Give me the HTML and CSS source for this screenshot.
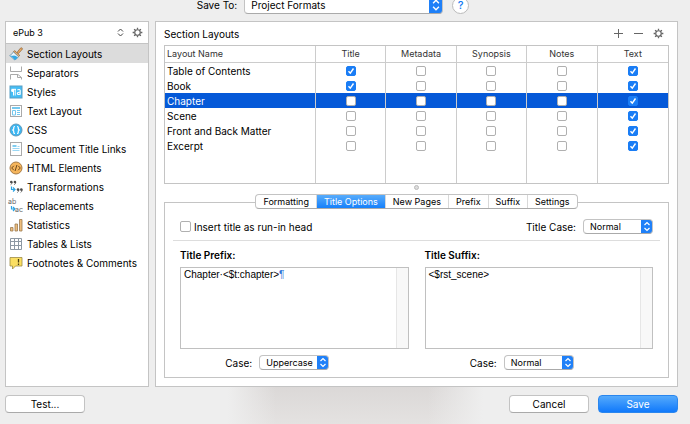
FILE: index.html
```html
<!DOCTYPE html>
<html lang="en">
<head>
    <meta charset="UTF-8">
    <meta name="viewport" content="width=device-width, initial-scale=1.0">
    <title>Compile</title>
    <link rel="stylesheet" href="styles.css">
</head>
<body>

<svg class="defs" width="0" height="0" aria-hidden="true">
    <symbol id="gear" viewBox="0 0 12 12">
        <circle cx="6" cy="6" r="3" fill="none" stroke="currentColor" stroke-width="1.3"/>
        <path d="M6 .7V2.8M6 9.2V11.3M.7 6H2.8M9.2 6H11.3M2.3 2.3L3.8 3.8M8.2 8.2L9.7 9.7M9.7 2.3L8.2 3.8M3.8 8.2L2.3 9.7" stroke="currentColor" stroke-width="1.4"/>
    </symbol>
</svg>

<div class="top-bar">
    <label for="saveTo">Save To:</label>
    <select id="saveTo" class="popup popup-large">
        <option>Project Formats</option>
    </select>
    <button type="button" class="help" aria-label="Help">?</button>
</div>

<div class="panels">
    <!-- Sidebar -->
    <nav class="sidebar">
        <div class="sidebar-header">
            <select class="format" aria-label="Format">
                <option>ePub 3</option>
            </select>
            <button type="button" class="icon-button" aria-label="Format options"><svg width="11" height="11"><use href="#gear"/></svg></button>
        </div>
        <ul class="sections">
            <li><a href="#" class="active">
                <svg viewBox="0 0 14 14"><path d="M8.2 5.2L11.4 1.2Q12.4 .3 13.2 1.2 13.8 2 12.8 3L9.4 6.4z" fill="#e9a860" stroke="#8a6238" stroke-width=".7"/><path d="M5.6 3.6L10.8 8.4 9.4 9.6 4.4 4.9z" fill="#e9b070" stroke="#8a6238" stroke-width=".7"/><path d="M4.4 4.9L9.4 9.6Q7.5 12.5 5.6 13 4.5 11.5 3.2 10.8 1.8 9.6 .6 8.6 3.2 7.4 4.4 4.9z" fill="#f2f7fa" stroke="#5d8ba6" stroke-width=".7"/><path d="M1 8.6Q3.2 9.2 5 8.4 7 8.6 8.8 10.4 7.2 12.4 5.6 13 3.6 10.6 1 8.6z" fill="#35a9e6"/></svg>
                Section Layouts</a></li>
            <li><a href="#">
                <svg viewBox="0 0 14 14" fill="none" stroke="#a9a9a9"><path d="M1.5 .5V5.500H12.500V.5M1.500 13.500V8.500H9L12.500 11.500V13.500M8.500 8.500V11.500H12.500"/></svg>
                Separators</a></li>
            <li><a href="#">
                <svg viewBox="0 0 14 14"><rect x="1" y="1" width="12" height="12" fill="#45bdf5" stroke="#5a9fc4"/><path d="M4.500 4V10.500M6.200 4V10.500M2.500 4.300H7" stroke="#fff" fill="none"/><circle cx="3.600" cy="5.500" r="1.500" fill="#fff"/><path d="M8.300 5Q10.800 3.800 11.200 5.600V9.800M11 7.200Q8.300 7 8.300 8.500 8.800 10.200 11 9" stroke="#fff" fill="none" stroke-width="1.100"/></svg>
                Styles</a></li>
            <li><a href="#">
                <svg viewBox="0 0 14 14" fill="none"><rect x="1.500" y="1.500" width="11" height="11" fill="#fff" stroke="#aaa"/><path d="M3 4H11" stroke="#74c8ef" stroke-width="2"/><path d="M3.500 6.500H6.500V11H3.500zM8 6.500H11M8 8.500H11M8 10.500H11" stroke="#74c8ef"/></svg>
                Text Layout</a></li>
            <li><a href="#">
                <svg viewBox="0 0 14 14" fill="none"><circle cx="7" cy="7" r="6" fill="#3bb6f2" stroke="#6199b9"/><path d="M6 3.500Q4.700 3.500 4.700 4.800V6L3.800 7 4.700 8V9.200Q4.700 10.500 6 10.500M8 3.500Q9.300 3.500 9.300 4.800V6L10.200 7 9.300 8V9.200Q9.300 10.500 8 10.500" stroke="#fff" stroke-width="1.200"/></svg>
                CSS</a></li>
            <li><a href="#">
                <svg viewBox="0 0 14 14" fill="none"><rect x="1.500" y=".5" width="11" height="13" fill="#fff" stroke="#aaa"/><path d="M3.500 3H7.500V5H3.500z" fill="#7fcdf1"/><path d="M3.500 6.500H10.500M3.500 8.500H10.500M8.500 4.500H10.500" stroke="#9ad7f4"/></svg>
                Document Title Links</a></li>
            <li><a href="#">
                <svg viewBox="0 0 14 14" fill="none"><circle cx="7" cy="7" r="6" fill="#f5b55c" stroke="#a77b45"/><path d="M4.800 4.800L2.700 7 4.800 9.200M9.200 4.800L11.300 7 9.200 9.200M7.900 4L6.100 10" stroke="#6d4a1e"/></svg>
                HTML Elements</a></li>
            <li><a href="#">
                <svg viewBox="0 0 14 14" fill="none"><g fill="#4c4c4c"><circle cx="2.300" cy="2" r="1.300"/><circle cx="5.900" cy="2" r="1.300"/><circle cx="9" cy="9.600" r="1.300"/><circle cx="12.300" cy="9.600" r="1.300"/></g><path d="M3.200 2Q3.200 4 1.600 4.700M6.800 2Q6.800 4 5.200 4.700M9.900 9.600Q9.900 11.600 8.300 12.500M13.200 9.600Q13.200 11.600 11.600 12.500" stroke="#4c4c4c" stroke-width=".8"/><path d="M2.500 6.500V9.500H5.500M4 7.500L6 9.500 4 11.500" stroke="#2ba3e4" stroke-width="1.200"/></svg>
                Transformations</a></li>
            <li><a href="#">
                <svg viewBox="0 0 14 14" fill="none"><g class="glyph" fill="#686868"><text x="-1" y="5">ab</text><text x="6" y="13">ac</text></g><path d="M2.500 7V10H5.500M4 8L6 10 4 12" stroke="#2ba3e4" stroke-width="1.200"/></svg>
                Replacements</a></li>
            <li><a href="#">
                <svg viewBox="0 0 14 14" fill="#edbd7c" stroke="#9c7b50" stroke-width=".8"><path d="M1.500 9.500H4V13H1.500zM6 6H8.500V13H6zM10.500 1.500H13V13H10.500z"/></svg>
                Statistics</a></li>
            <li><a href="#">
                <svg viewBox="0 0 14 14" fill="#fff" stroke="#8d98a3"><path d="M1.500 1.500H12.500V12.500H1.500zM5.500 1.500V12.500M9.500 1.500V12.500M1.500 4.500H12.500M1.500 8.500H12.500"/></svg>
                Tables &amp; Lists</a></li>
            <li><a href="#">
                <svg viewBox="0 0 14 14"><path d="M1 1.500H13V10H6.500L3.500 13V10H1z" fill="#fbdf62" stroke="#9c8a45" stroke-width=".8"/><path d="M9.500 3V6.500M9.500 7.500V9" stroke="#4a3d10" stroke-width="1.300"/></svg>
                Footnotes &amp; Comments</a></li>
        </ul>
    </nav>

    <!-- Section layouts -->
    <main class="content">
        <div class="heading-row">
            <h1>Section Layouts</h1>
            <button type="button" class="icon-button" aria-label="Add"><svg width="11" height="11"><path d="M5.500 1V10M1 5.500H10" stroke="currentColor"/></svg></button>
            <button type="button" class="icon-button" aria-label="Remove"><svg width="11" height="11"><path d="M1 5.500H10" stroke="currentColor"/></svg></button>
            <button type="button" class="icon-button" aria-label="Layout options"><svg width="11" height="11"><use href="#gear"/></svg></button>
        </div>

        <table class="layouts">
            <thead>
                <tr><th>Layout Name</th><th>Title</th><th>Metadata</th><th>Synopsis</th><th>Notes</th><th>Text</th></tr>
            </thead>
            <tbody>
                <tr>
                    <td>Table of Contents</td>
                    <td><input type="checkbox" aria-label="Title" checked></td>
                    <td><input type="checkbox" aria-label="Metadata"></td>
                    <td><input type="checkbox" aria-label="Synopsis"></td>
                    <td><input type="checkbox" aria-label="Notes"></td>
                    <td><input type="checkbox" aria-label="Text" checked></td>
                </tr>
                <tr>
                    <td>Book</td>
                    <td><input type="checkbox" aria-label="Title" checked></td>
                    <td><input type="checkbox" aria-label="Metadata"></td>
                    <td><input type="checkbox" aria-label="Synopsis"></td>
                    <td><input type="checkbox" aria-label="Notes"></td>
                    <td><input type="checkbox" aria-label="Text" checked></td>
                </tr>
                <tr class="selected">
                    <td>Chapter</td>
                    <td><input type="checkbox" aria-label="Title"></td>
                    <td><input type="checkbox" aria-label="Metadata"></td>
                    <td><input type="checkbox" aria-label="Synopsis"></td>
                    <td><input type="checkbox" aria-label="Notes"></td>
                    <td><input type="checkbox" aria-label="Text" checked></td>
                </tr>
                <tr>
                    <td>Scene</td>
                    <td><input type="checkbox" aria-label="Title"></td>
                    <td><input type="checkbox" aria-label="Metadata"></td>
                    <td><input type="checkbox" aria-label="Synopsis"></td>
                    <td><input type="checkbox" aria-label="Notes"></td>
                    <td><input type="checkbox" aria-label="Text" checked></td>
                </tr>
                <tr>
                    <td>Front and Back Matter</td>
                    <td><input type="checkbox" aria-label="Title"></td>
                    <td><input type="checkbox" aria-label="Metadata"></td>
                    <td><input type="checkbox" aria-label="Synopsis"></td>
                    <td><input type="checkbox" aria-label="Notes"></td>
                    <td><input type="checkbox" aria-label="Text" checked></td>
                </tr>
                <tr>
                    <td>Excerpt</td>
                    <td><input type="checkbox" aria-label="Title"></td>
                    <td><input type="checkbox" aria-label="Metadata"></td>
                    <td><input type="checkbox" aria-label="Synopsis"></td>
                    <td><input type="checkbox" aria-label="Notes"></td>
                    <td><input type="checkbox" aria-label="Text" checked></td>
                </tr>
                <tr class="filler"><td></td><td></td><td></td><td></td><td></td><td></td></tr>
            </tbody>
        </table>

        <div class="splitter"></div>

        <div class="tabs" role="tablist">
            <button type="button" role="tab">Formatting</button>
            <button type="button" role="tab" class="active" aria-selected="true">Title Options</button>
            <button type="button" role="tab">New Pages</button>
            <button type="button" role="tab">Prefix</button>
            <button type="button" role="tab">Suffix</button>
            <button type="button" role="tab">Settings</button>
        </div>

        <!-- Title options -->
        <section class="options">
            <div class="options-row">
                <input type="checkbox" id="runIn" class="check-large">
                <label for="runIn">Insert title as run-in head</label>
                <label for="titleCase" class="push">Title Case:</label>
                <select id="titleCase" class="popup">
                    <option>Normal</option>
                </select>
            </div>
            <hr>
            <div class="columns">
                <div class="column">
                    <label for="prefix" class="title">Title Prefix:</label>
                    <div class="editor">
                        <textarea id="prefix" spellcheck="false">Chapter·&lt;$t:chapter&gt;</textarea>
                        <span class="pilcrow">¶</span>
                    </div>
                    <div class="case-row">
                        <label for="prefixCase">Case:</label>
                        <select id="prefixCase" class="popup">
                            <option>Uppercase</option>
                        </select>
                    </div>
                </div>
                <div class="column">
                    <label for="suffix" class="title">Title Suffix:</label>
                    <div class="editor">
                        <textarea id="suffix" spellcheck="false">&lt;$rst_scene&gt;</textarea>
                    </div>
                    <div class="case-row">
                        <label for="suffixCase">Case:</label>
                        <select id="suffixCase" class="popup">
                            <option>Normal</option>
                        </select>
                    </div>
                </div>
            </div>
        </section>
    </main>
</div>

<footer class="footer">
    <button type="button" class="button">Test...</button>
    <button type="button" class="button push">Cancel</button>
    <button type="button" class="button primary">Save</button>
</footer>

</body>
</html>
```
FILE: styles.css
```css
* {
    box-sizing: border-box;
}
body {
    display: flex;
    flex-direction: column;
    min-height: 100vh;
    margin: 0;
    overflow: hidden;
    background-color: #eee;
    color: #000;
    font-family: Inter, "Liberation Sans", sans-serif;
    font-size: 10px;
    line-height: 14px;
}
button, select, textarea {
    margin: 0;
    color: inherit;
    font-family: inherit;
}
.defs {
    position: absolute;
}
.push {
    margin-left: auto;
}

/* Top bar, tucked against the top of the window */
.top-bar {
    display: flex;
    align-items: center;
    justify-content: center;
    height: 20px;
    margin: -5px 24px 6px 0;
}
.help {
    width: 17px;
    height: 17px;
    margin-left: 9px;
    padding: 0;
    border: 1px solid #bbb;
    border-radius: 50%;
    background-color: #fff;
    color: #1178f2;
    font-size: 11px;
    font-weight: 500;
    line-height: 14px;
}

/* Pop-up menus */
.popup {
    appearance: none;
    width: 70px;
    height: 15px;
    margin-left: 7px;
    padding: 0 14px 0 6px;
    border: 1px solid #c3c3c3;
    border-bottom-color: #aaa;
    border-radius: 4px;
    background: #fff url("data:image/svg+xml,%3Csvg xmlns='http://www.w3.org/2000/svg' width='12' height='15'%3E%3Cpath d='M0 0H9Q12 0 12 3V12Q12 15 9 15H0z' fill='%231f80f8'/%3E%3Cpath d='M3.500 6L6 3.500 8.500 6M3.500 9L6 11.500 8.500 9' fill='none' stroke='white' stroke-width='1.200'/%3E%3C/svg%3E") right / 12px 15px no-repeat border-box;
    font-size: 9px;
    line-height: 13px;
}
.popup-large {
    width: 199px;
    height: 18px;
    font-size: 10px;
    line-height: 16px;
    background-size: 14px 18px;
}

/* Panels */
.panels {
    display: flex;
    flex: 1;
    gap: 6px;
    padding: 0 12px 0 5px;
}
.sidebar, .content {
    border: 1px solid #c4c4c4;
    background-color: #fff;
}
.sidebar {
    width: 144px;
}
.sidebar-header {
    display: flex;
    align-items: center;
    height: 22px;
    padding: 0 5px 0 7px;
    border-bottom: 1px solid #c4c4c4;
}
.format {
    appearance: none;
    flex: 1;
    padding: 0;
    border: none;
    background: url("data:image/svg+xml,%3Csvg xmlns='http://www.w3.org/2000/svg' width='7' height='9'%3E%3Cpath d='M1 3.500L3.500 1 6 3.500M1 5.500L3.500 8 6 5.500' fill='none' stroke='%23444'/%3E%3C/svg%3E") right 8px center no-repeat;
    font-size: 9px;
}
.icon-button {
    display: flex;
    padding: 0;
    border: none;
    background: none;
    color: #666;
}
.sections {
    margin: 0;
    padding: 0;
    list-style: none;
}
.sections a {
    display: flex;
    align-items: center;
    gap: 4px;
    height: 19px;
    padding-left: 3px;
    color: inherit;
    text-decoration: none;
    white-space: nowrap;
}
.sections .active {
    background-color: #dcdcdc;
}
.sections svg {
    width: 14px;
    height: 14px;
    overflow: visible;
}
.glyph {
    font-size: 7px;
}

.content {
    display: flex;
    flex: 1;
    flex-direction: column;
    min-width: 0;
    padding: 0 8px 8px;
}
.heading-row {
    display: flex;
    align-items: center;
    gap: 9px;
    height: 23px;
    padding-right: 5px;
}
h1 {
    flex: 1;
    margin: 0;
    font-size: 10px;
    font-weight: 400;
}

/* Layout table */
.layouts {
    width: 100%;
    border: 1px solid #c4c4c4;
    border-spacing: 0;
    table-layout: fixed;
}
.layouts th, .layouts td {
    height: 15px;
    padding: 0;
    border-right: 1px solid #ccc;
    line-height: 14px;
    text-align: center;
}
.layouts th {
    width: 14%;
    height: 17px;
    border-bottom: 1px solid #ccc;
    color: #333;
    font-size: 9px;
    font-weight: 400;
}
.layouts th:first-child {
    width: 30%;
}
.layouts th:first-child, .layouts td:first-child {
    padding-left: 2px;
    text-align: left;
}
.layouts th:last-child, .layouts td:last-child {
    border-right: none;
}
.layouts .selected td {
    background-color: #0559d8;
    color: #fff;
}
.layouts .filler td {
    height: 30px;
}
input[type="checkbox"] {
    appearance: none;
    display: block;
    width: 10px;
    height: 10px;
    margin: 0 auto;
    border: 1px solid #b0b0b0;
    border-radius: 2px;
    background-color: #fff;
}
input[type="checkbox"]:checked {
    border-color: #1a7df5;
    background: #1a7df5 url("data:image/svg+xml,%3Csvg xmlns='http://www.w3.org/2000/svg' width='10' height='10'%3E%3Cpath d='M2.500 5.200L4.300 7.200 7.500 2.500' fill='none' stroke='white' stroke-width='1.400'/%3E%3C/svg%3E") center / 10px 10px no-repeat border-box;
}
input.check-large {
    width: 11px;
    height: 11px;
    margin: 0 3px 0 0;
}

.splitter {
    width: 5px;
    height: 5px;
    margin: 1px auto 4px;
    border: 1px solid #bbb;
    border-radius: 50%;
    background-color: #ddd;
}

/* Tabs sit over the top edge of the options box */
.tabs {
    position: relative;
    display: flex;
    align-self: center;
    height: 15px;
    margin-bottom: -7px;
    border: 1px solid #c3c3c3;
    border-bottom-color: #aaa;
    border-radius: 4px;
    background-color: #fff;
    overflow: hidden;
}
.tabs button {
    padding: 0 7px;
    border: none;
    border-right: 1px solid #d8d8d8;
    background: none;
    font-size: 9px;
    line-height: 13px;
}
.tabs button:last-child {
    border-right: none;
}
.tabs .active {
    background: linear-gradient(#58acfb, #1580fb);
    color: #fff;
}

.options {
    display: flex;
    flex: 1;
    flex-direction: column;
    padding: 16px 8px 7px;
    border: 1px solid #c4c4c4;
}
.options-row {
    display: flex;
    align-items: center;
    padding: 0 7px;
}
hr {
    width: 100%;
    margin: 6px 0 7px;
    border: none;
    border-top: 1px solid #ddd;
}
.columns {
    display: flex;
    flex: 1;
    gap: 16px;
    padding: 0 7px;
}
.column {
    display: flex;
    flex: 1;
    flex-direction: column;
}
.title {
    margin-bottom: 5px;
    font-weight: 600;
}
.editor {
    position: relative;
    display: flex;
    flex: 1;
}
.editor textarea {
    flex: 1;
    min-width: 0;
    padding: 0 16px 0 3px;
    border: 1px solid #c0c0c0;
    background: linear-gradient(to right, #e6e6e6 1px, #f8f8f8 1px) right / 12px 100% no-repeat #fff;
    font-family: "Liberation Sans", sans-serif;
    font-size: 10px;
    line-height: 13px;
    resize: none;
}
.pilcrow {
    position: absolute;
    top: 1px;
    left: 99px;
    color: #2f74d6;
    font-family: "Liberation Sans", sans-serif;
    font-size: 10px;
    line-height: 13px;
}
.case-row {
    display: flex;
    align-items: center;
    justify-content: center;
    margin-top: 6px;
    padding-right: 34px;
}

/* Footer */
.footer {
    display: flex;
    gap: 9px;
    padding: 8px 12px 11px 5px;
    background:
        linear-gradient(to right, #eee 33%, transparent 40%, transparent 62%, #eee 70%),
        linear-gradient(#dbd8d7, #e4e2e1);
}
.button {
    width: 80px;
    height: 18px;
    padding: 0;
    border: 1px solid #c3c3c3;
    border-bottom-color: #aaa;
    border-radius: 4px;
    background-color: #fff;
    font-size: 10px;
    line-height: 14px;
}
.primary {
    border-color: #2a86ee;
    background: linear-gradient(#55aafc, #1079fb);
    color: #fff;
}
```
